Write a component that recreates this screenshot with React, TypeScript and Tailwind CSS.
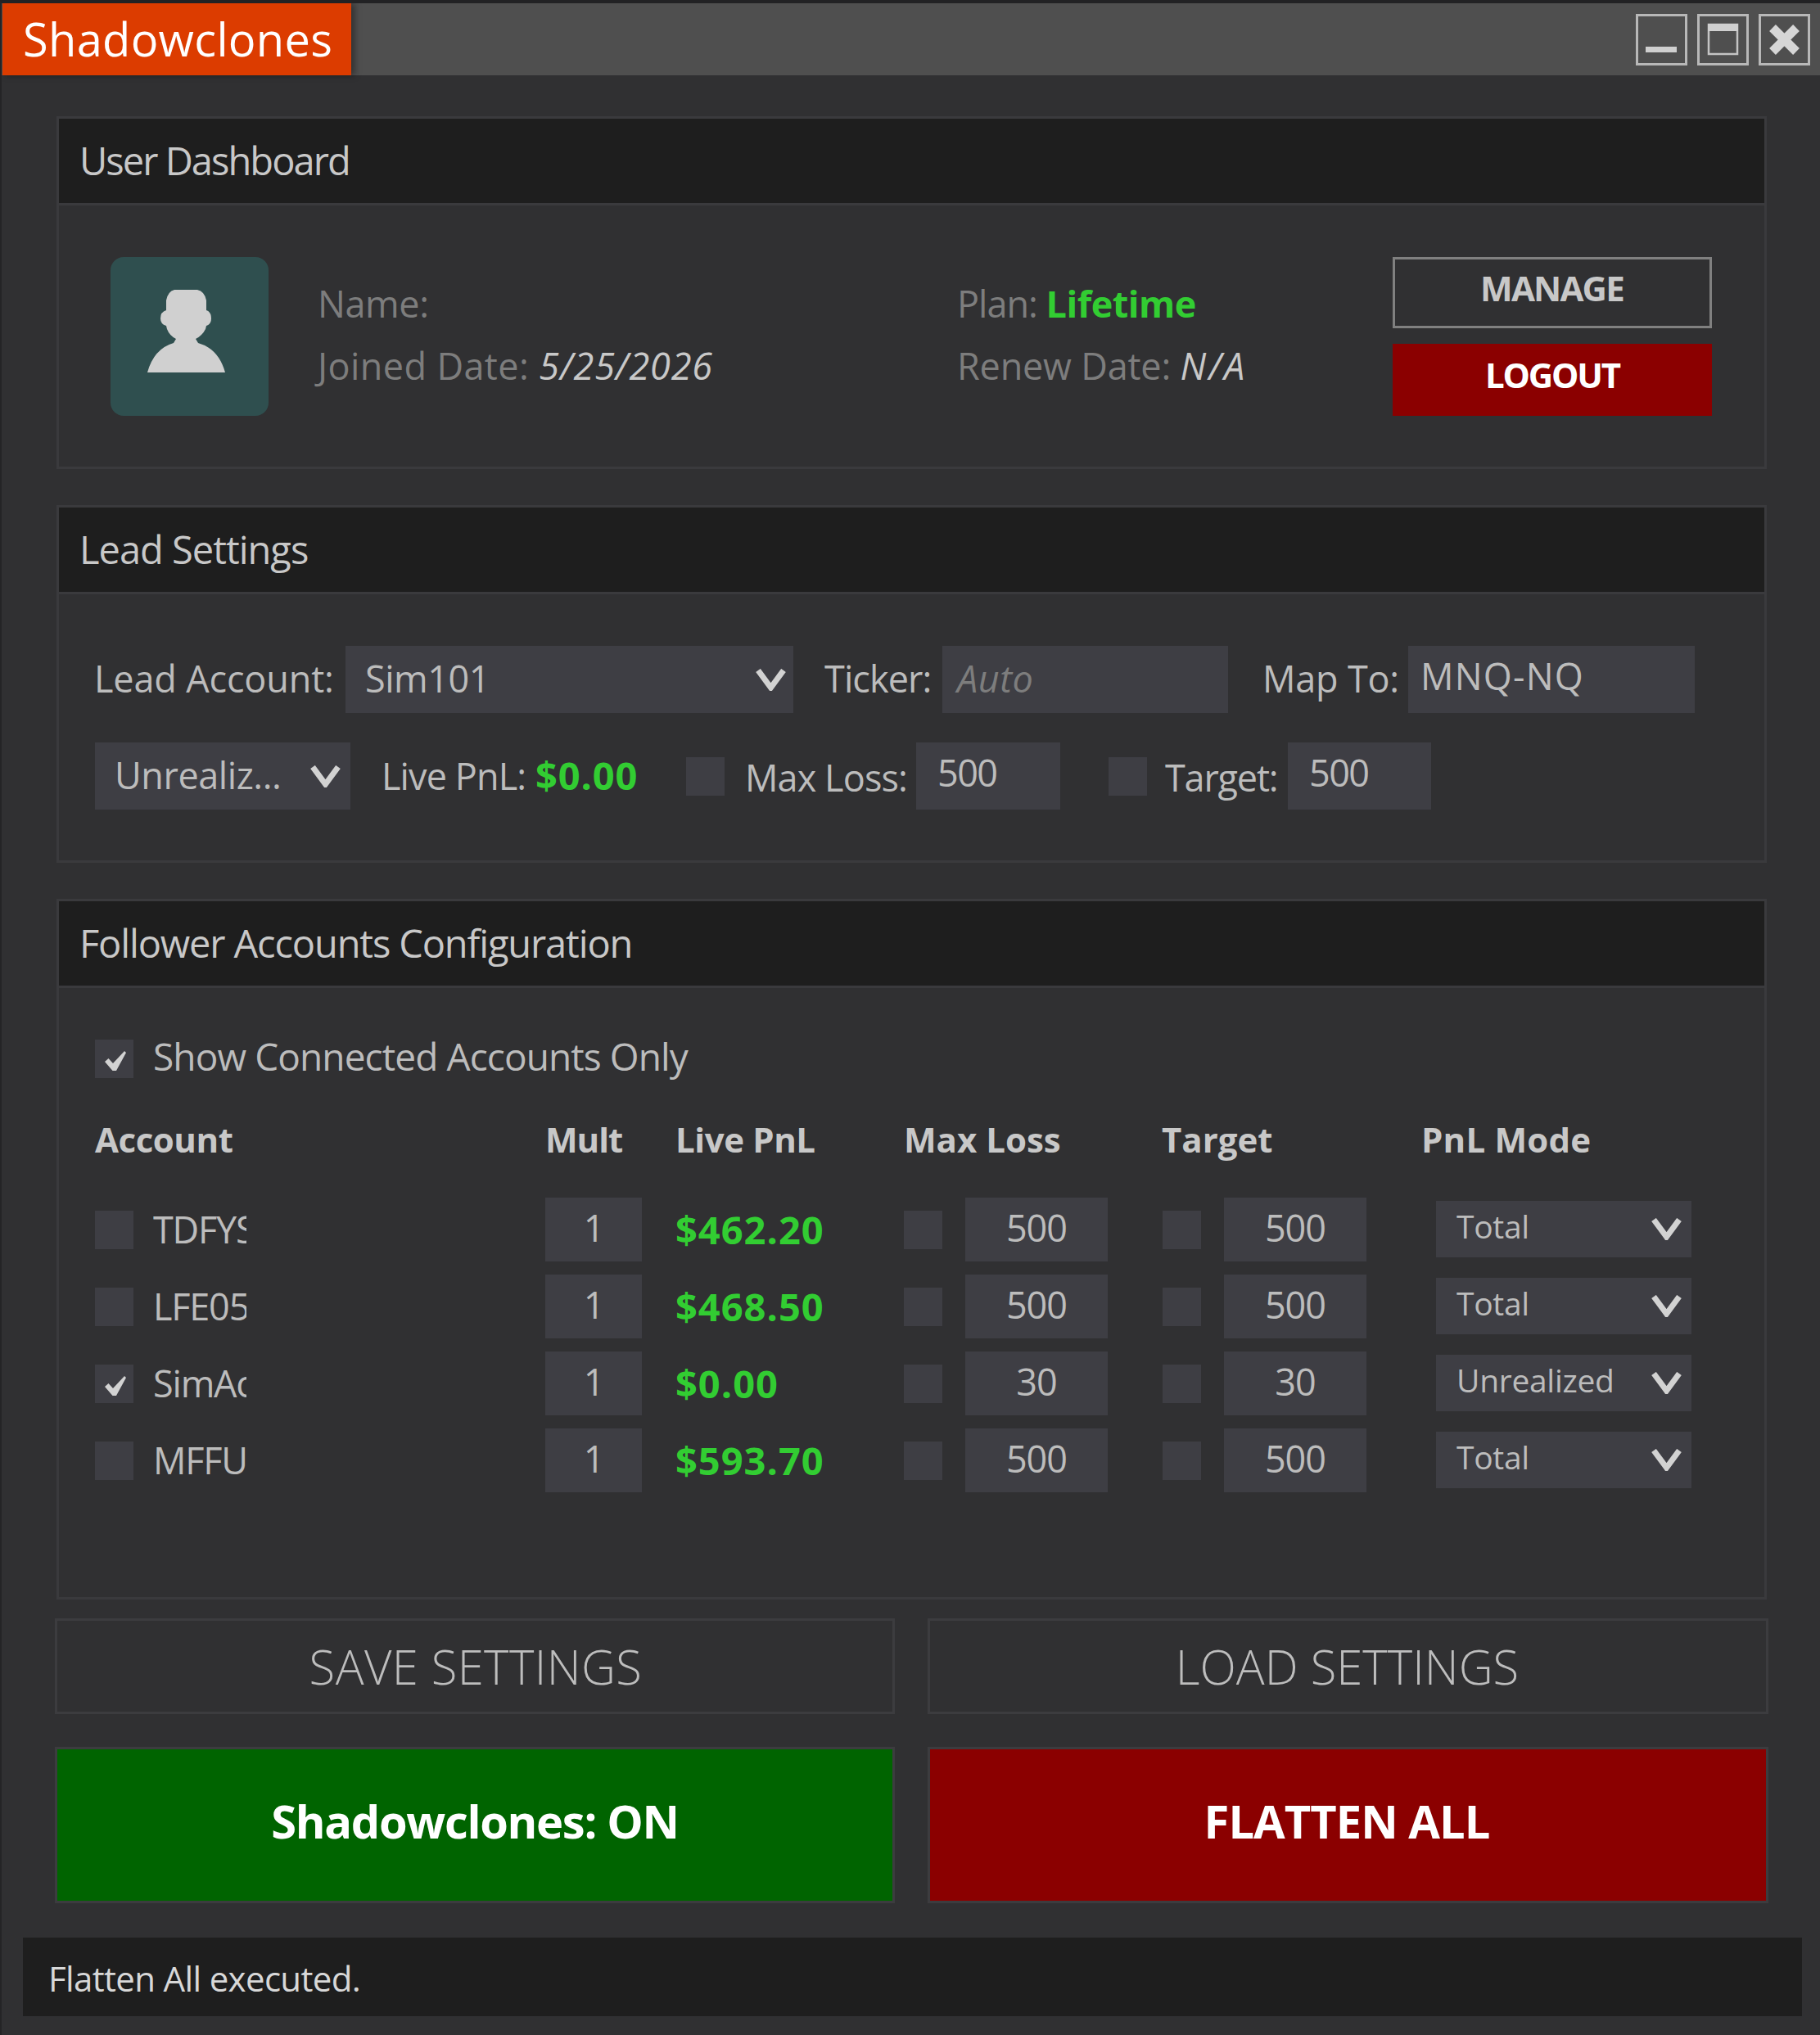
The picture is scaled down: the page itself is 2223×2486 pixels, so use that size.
import { Fragment } from "react";

const BOX = "bg-[#3e3e44]";

function Chevron({ className }: { className: string }) {
  return (
    <svg viewBox="0 0 37 27" className={className}>
      <polyline points="3,2 18.5,23 34,2" fill="none" stroke="#d2d2d2" strokeWidth="7" />
    </svg>
  );
}

function Check({ on }: { on?: boolean }) {
  return (
    <div className={`w-[47px] h-[47px] ${BOX} shrink-0`}>
      {on && (
        <svg viewBox="0 0 47 47" className="w-full h-full">
          <path d="M12 27 L16.5 23 L22 29 L36 14 L38 16 L26 38 L21.5 38 Z" fill="#d2d2d2" />
        </svg>
      )}
    </div>
  );
}

function Section({ title, track, className, children }: { title: string; track: string; className: string; children: React.ReactNode }) {
  return (
    <section className={`ml-[67px] w-[2089px] border-[3px] border-[#3a3a3d] ${className}`}>
      <div className={`h-[103px] bg-[#1e1e1e] border-b-[3px] border-[#3a3a3d] box-content flex items-center pl-[25px] text-[47px] text-[#c8c8c8] ${track}`}>
        {title}
      </div>
      {children}
    </section>
  );
}

const rows = [
  { id: "TDFYS", on: false, mult: "1", pnl: "$462.20", loss: "500", target: "500", mode: "Total" },
  { id: "LFE05", on: false, mult: "1", pnl: "$468.50", loss: "500", target: "500", mode: "Total" },
  { id: "SimAcc", on: true, mult: "1", pnl: "$0.00", loss: "30", target: "30", mode: "Unrealized" },
  { id: "MFFU", on: false, mult: "1", pnl: "$593.70", loss: "500", target: "500", mode: "Total" },
];

export default function App() {
  return (
    <div className="w-[2223px] h-[2486px] bg-[#303032] border-t-[4px] border-t-[#222224] border-l-[2px] border-l-[#242426] flex flex-col overflow-hidden font-['Open_Sans',sans-serif]">
      {/* title bar */}
      <header className="h-[88px] shrink-0 bg-[#4f4f4f] flex justify-between">
        <div className="ml-[1px] w-[426px] h-[88px] bg-[#dc3c00] shadow-[4px_0_8px_rgba(0,0,0,0.4)] flex items-center pl-[25px] pb-[2px] text-[56px] text-white tracking-[0.3px]">
          Shadowclones
        </div>
        <div className="flex gap-[12px] pt-[13px] pr-[12px]">
          <div className="w-[63px] h-[63px] border-[3px] border-[#b8b8b8]">
            <svg viewBox="0 0 57 57" className="w-full h-full">
              <rect x="9" y="37" width="38" height="7" fill="#cfcfcf" />
            </svg>
          </div>
          <div className="w-[63px] h-[63px] border-[3px] border-[#b8b8b8]">
            <svg viewBox="0 0 57 57" className="w-full h-full">
              <rect x="11" y="10" width="35" height="36" fill="none" stroke="#c4c4c4" strokeWidth="2.5" />
              <rect x="10" y="9" width="37" height="9" fill="#cfcfcf" />
            </svg>
          </div>
          <div className="w-[63px] h-[63px] border-[3px] border-[#b8b8b8]">
            <svg viewBox="0 0 57 57" className="w-full h-full">
              <path d="M14 14 L43 43 M43 14 L14 43" stroke="#d6d6d6" strokeWidth="11" fill="none" />
            </svg>
          </div>
        </div>
      </header>

      {/* user dashboard */}
      <Section title="User Dashboard" track="tracking-[-1.95px]" className="mt-[50px] h-[431px]">
        <div className="flex pt-[63px] pl-[63px]">
          <div className="w-[193px] h-[194px] rounded-[16px] bg-[#2f4f4f] shrink-0">
            <svg viewBox="0 0 193 194" className="w-full h-full">
              <path
                d="M78 40 H106 Q115 42 117 53 L117 65 Q123 67 123 75 Q123 82 117 84 L116 88 Q112 96 104 100 L107 105 Q132 112 140 141 H45 Q53 112 77 105 L80 100 Q72 96 69 88 L68 84 Q61 82 61 75 Q61 67 68 65 L68 53 Q70 42 78 40 Z"
                fill="#d0d0d0"
              />
            </svg>
          </div>
          <div className="ml-[60px] w-[781px] mt-[19px] text-[45px] leading-[76px] text-[#7d7d7d]">
            <div className="tracking-[-0.4px]">Name:</div>
            <div className="tracking-[0.4px]">
              Joined Date: <span className="italic text-[#c8c8c8] tracking-[0.85px]">5/25/2026</span>
            </div>
          </div>
          <div className="w-[532px] mt-[19px] text-[45px] leading-[76px] text-[#7d7d7d]">
            <div className="tracking-[-1px]">
              Plan: <span className="font-bold text-[#32cd32] tracking-[-0.5px]">Lifetime</span>
            </div>
            <div className="tracking-[-0.2px]">
              Renew Date: <span className="italic text-[#c8c8c8] tracking-[3px]">N/A</span>
            </div>
          </div>
          <div className="w-[390px] flex flex-col gap-[19px]">
            <div className="h-[87px] border-[3px] border-[#808080] flex items-center justify-center pb-[12px] pr-[1px] text-[42px] font-bold text-[#c8c8c8] tracking-[-1.8px]">
              MANAGE
            </div>
            <div className="h-[88px] bg-[#8b0000] flex items-center justify-center pb-[14px] text-[42px] font-bold text-white tracking-[-2.2px]">
              LOGOUT
            </div>
          </div>
        </div>
      </Section>

      {/* lead settings */}
      <Section title="Lead Settings" track="tracking-[-1px]" className="mt-[44px] h-[437px]">
        <div className="pl-[44px] pt-[63px] text-[45px] text-[#bcbcbc]">
          <div className="grid grid-cols-[306px_547px_182px_349px_220px_350px] h-[82px] items-center">
            <div className="tracking-[-0.15px] -ml-[1px] pb-[3px]">Lead Account:</div>
            <div className={`h-[82px] ${BOX} flex items-center justify-between pl-[24px] pr-[9px] tracking-[-0.5px]`}>
              <span className="pb-[3px]">Sim101</span>
              <Chevron className="w-[37px] h-[27px]" />
            </div>
            <div className="pl-[38px] pb-[3px] tracking-[-0.9px]">Ticker:</div>
            <div className={`h-[82px] ${BOX} flex items-center pl-[18px] pb-[3px] italic text-[#7d7d7d] tracking-[0.5px]`}>Auto</div>
            <div className="pl-[42px] pb-[3px] tracking-[-0.2px]">Map To:</div>
            <div className={`h-[82px] ${BOX} flex items-center pl-[15px] pb-[9px] tracking-[1.2px]`}>MNQ-NQ</div>
          </div>
          <div className="flex items-center h-[82px] mt-[36px]">
            <div className={`w-[312px] h-[82px] ${BOX} shrink-0 flex items-center justify-between pl-[24px] pr-[12px] pb-[2px] tracking-[-0.45px]`}>
              <span>Unrealiz...</span>
              <Chevron className="w-[37px] h-[27px] mt-[2px]" />
            </div>
            <div className="w-[410px] pl-[38px] pb-[2px] tracking-[-0.9px]">
              Live PnL: <span className="ml-[1px] text-[47px] font-bold text-[#32cd32] tracking-[0.9px]">$0.00</span>
            </div>
            <Check />
            <div className="w-[234px] pl-[25px] pt-[4px] tracking-[-0.9px]">Max Loss:</div>
            <div className={`w-[176px] h-[82px] ${BOX} flex items-center pl-[26px] pb-[8px] tracking-[-1.6px]`}>500</div>
            <div className="w-[59px]" />
            <Check />
            <div className="w-[172px] pl-[22px] pt-[4px] tracking-[-1.2px]">Target:</div>
            <div className={`w-[175px] h-[82px] ${BOX} flex items-center pl-[26px] pb-[8px] tracking-[-1.6px]`}>500</div>
          </div>
        </div>
      </Section>

      {/* followers */}
      <Section title="Follower Accounts Configuration" track="tracking-[-1.14px]" className="mt-[44px] h-[856px]">
        <div className="pl-[44px] pt-[63px]">
          <div className="flex items-center h-[47px] text-[46px] text-[#bcbcbc] tracking-[-0.9px]">
            <Check on />
            <span className="ml-[24px] pb-[7px]">Show Connected Accounts Only</span>
          </div>
          <div className="grid grid-cols-[550px_160px_279px_314px_317px_1fr] items-center h-[60px] mt-[43px] text-[42px] font-bold text-[#c8c8c8]">
            <div className="tracking-[-0.45px]">Account</div>
            <div className="tracking-[-1px]">Mult</div>
            <div className="-ml-[1px] tracking-[-0.4px]">Live PnL</div>
            <div className="-ml-[1px] tracking-[0px]">Max Loss</div>
            <div className="tracking-[0px]">Target</div>
            <div className="tracking-[0.2px]">PnL Mode</div>
          </div>
          <div className="grid grid-cols-[550px_162px_276px_316px_334px_312px] auto-rows-[78px] gap-y-[16px] mt-[43px] items-center text-[45px] text-[#bcbcbc]">
            {rows.map((r) => (
              <Fragment key={r.id}>
                <div className="flex items-center">
                  <Check on={r.on} />
                  <span className="ml-[24px] w-[114px] overflow-hidden whitespace-nowrap tracking-[-1.2px]">{r.id}</span>
                </div>
                <div className={`w-[118px] h-[78px] ${BOX} flex items-center justify-center pb-[5px] pl-[1px]`}>{r.mult}</div>
                <div className="-ml-[3px] text-[47px] font-bold text-[#32cd32] tracking-[1px]">{r.pnl}</div>
                <div className="flex items-center gap-[28px]">
                  <Check />
                  <div className={`w-[174px] h-[78px] ${BOX} flex items-center justify-center pb-[5px] tracking-[-1px]`}>{r.loss}</div>
                </div>
                <div className="flex items-center gap-[28px]">
                  <Check />
                  <div className={`w-[174px] h-[78px] ${BOX} flex items-center justify-center pb-[5px] tracking-[-1px]`}>{r.target}</div>
                </div>
                <div className={`w-[312px] h-[69px] mb-[2px] ${BOX} flex items-center justify-between pl-[25px] pr-[12px] pb-[5px] text-[39px] tracking-[-0.3px]`}>
                  <span>{r.mode}</span>
                  <Chevron className="w-[37px] h-[27px] mt-[5px]" />
                </div>
              </Fragment>
            ))}
          </div>
        </div>
      </Section>

      {/* actions */}
      <div className="ml-[65px] w-[2093px] grid grid-cols-[1026px_1027px] gap-x-[40px] mt-[23px]">
        <div className="h-[117px] border-[3px] border-[#3c3c3f] flex items-center justify-center pl-[2px] text-[58px] font-light text-[#bdbdbd] tracking-[0.4px]">SAVE SETTINGS</div>
        <div className="h-[117px] border-[3px] border-[#3c3c3f] flex items-center justify-center pr-[2px] text-[58px] font-light text-[#bdbdbd] tracking-[0px]">LOAD SETTINGS</div>
        <div className="h-[191px] mt-[40px] border-[3px] border-[#3c3c3f] bg-[#006400] flex items-center justify-center pb-[12px] text-[56px] font-bold text-white tracking-[-1.3px]">Shadowclones: ON</div>
        <div className="h-[191px] mt-[40px] border-[3px] border-[#3c3c3f] bg-[#8b0000] flex items-center justify-center pb-[12px] pr-[3px] text-[56px] font-bold text-white tracking-[-0.95px]">FLATTEN ALL</div>
      </div>

      {/* status */}
      <div className="ml-[26px] w-[2173px] h-[96px] mt-[42px] bg-[#1e1e1e] flex items-center pl-[31px] pt-[2px] text-[42px] text-[#d8d8d8] tracking-[-0.65px]">
        Flatten All executed.
      </div>
    </div>
  );
}
